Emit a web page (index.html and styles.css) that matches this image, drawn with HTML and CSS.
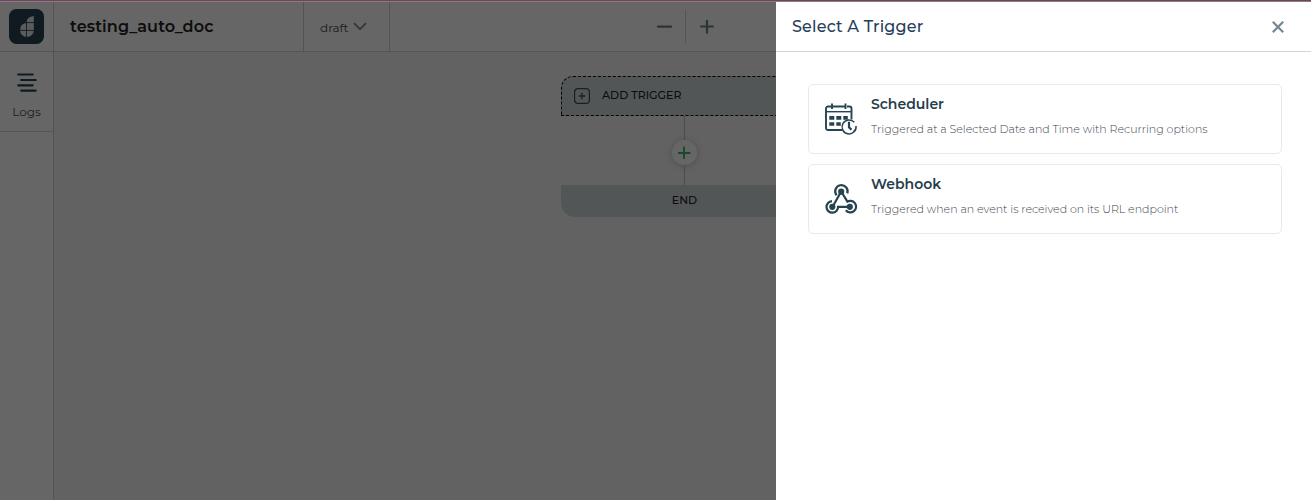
FILE: index.html
```html
<!DOCTYPE html>
<html lang="en">
<head>
<meta charset="utf-8">
<title>testing_auto_doc</title>
<link rel="stylesheet" href="styles.css">
</head>
<body>
<div class="app">
  <div class="top-strip"></div>
  <header class="header">
    <div class="brand">
      <svg class="logo" viewBox="0 0 35 35">
        <rect width="35" height="35" rx="7.500" fill="#264450"/>
        <path d="M24.800 7v14.300a6.900 6.700 0 0 1-13.800 0q0-6.300 6.300-7.300q.5-6.300 7.500-7z" fill="#e6e6e6"/>
        <path d="M17.500 13v16M10 21.400h16M17 13.600h9" stroke="#264450" stroke-width=".9" fill="none"/>
      </svg>
    </div>
    <div class="flow-name"><span class="t-name">testing_auto_doc</span></div>
    <div class="status">
      <span class="t-draft">draft</span>
      <svg width="14" height="9" viewBox="0 0 14 9"><path d="M1 1.200l6 6 6-6" fill="none" stroke="#7b8794" stroke-width="1.800"/></svg>
    </div>
    <div class="zoom">
      <svg width="16" height="16" viewBox="0 0 16 16"><path d="M2 7.600h13" stroke="#738087" stroke-width="2.200" stroke-linecap="round"/></svg>
      <i class="zoom-line"></i>
      <svg width="16" height="16" viewBox="0 0 16 16"><path d="M1.200 7.500h13.600M8 1v13.500" stroke="#738087" stroke-width="2.200"/></svg>
    </div>
  </header>
  <div class="main">
    <nav class="sidebar">
      <div class="side-item">
        <svg width="20" height="20" viewBox="0 0 20 20"><path d="M1.200 1.500h14.500M4.200 7h14.500M1.200 12.300h14.500M4.200 17.600h14.500" stroke="#264450" stroke-width="2.200" stroke-linecap="round"/></svg>
        <span class="t-logs">Logs</span>
      </div>
    </nav>
    <section class="canvas">
      <div class="flow">
        <div class="node trigger">
          <svg width="16" height="16" viewBox="0 0 16 16"><rect x=".6" y=".6" width="14.800" height="14.800" rx="3.500" fill="none" stroke="#3d4f60" stroke-width="1.200"/><path d="M4.700 8h6.600M8 4.700v6.600" stroke="#3d4f60" stroke-width="1.300"/></svg>
          <span class="t-add">ADD TRIGGER</span>
        </div>
        <i class="wire wire-top"></i>
        <div class="plus">
          <svg width="13" height="13" viewBox="0 0 13 13"><path d="M0 7h12.500M6 .5v12.500" stroke="#3cb371" stroke-width="1.800"/></svg>
        </div>
        <i class="wire wire-bottom"></i>
        <div class="node end"><span class="t-end">END</span></div>
      </div>
    </section>
  </div>
  <div class="backdrop"></div>
  <aside class="drawer">
    <div class="drawer-head">
      <span class="t-title">Select A Trigger</span>
      <svg width="12" height="12" viewBox="0 0 12 12"><path d="M.8.800l10.400 10.400M11.200.800L.8 11.200" stroke="#738792" stroke-width="2.200"/></svg>
    </div>
    <div class="options">
      <div class="option">
        <svg class="option-icon" viewBox="0 0 32 32" fill="none" stroke="#264450">
          <path d="M17 27H3.200A2 2 0 0 1 1 24.800V5.500a2 2 0 0 1 2-2h3.500M8 3.500h12M22 3.500h2.500a2 2 0 0 1 2 2v11" stroke-width="1.900"/>
          <path d="M7 .5v5.500M20.500.500v5.500" stroke-width="1.900"/>
          <path d="M1 8.700h25.500" stroke-width="1.400"/>
          <path d="M4.300 14.800h5M11.300 14.800h5M18.300 14.800h4.500" stroke-width="3.700"/>
          <path d="M4.300 21h5M11.300 21h4.500" stroke-width="3.700"/>
          <path d="M29.300 19.300a7 7 0 1 0 1.700 3.700M28.500 28.700a7 7 0 0 0 2.300-3.200" stroke-width="1.500"/>
          <path d="M24 18.800v5.500l2.500 2.500" stroke-width="2.200"/>
        </svg>
        <div class="copy"><span class="t-sch">Scheduler</span><span class="desc t-d1">Triggered at a Selected Date and Time with Recurring options</span></div>
      </div>
      <div class="option">
        <svg class="option-icon" viewBox="0 0 32 32" fill="none" stroke="#264450" stroke-width="2.200">
          <path d="M22.300 10.300A6.200 6.200 0 1 0 11.600 12.300"/>
          <path d="M16.200 8.500L8 23M16.200 8.500l6.500 10.600"/>
          <path d="M21.800 19a5.800 5.800 0 1 1-1 8.300"/>
          <path d="M7 18.100a5.800 5.800 0 1 0 6.100 5.700h11.700"/>
          <g fill="#264450" stroke="none"><circle cx="16.200" cy="8.700" r="3.100"/><circle cx="7.300" cy="23.800" r="3.100"/><circle cx="24.800" cy="23.800" r="3.100"/></g>
        </svg>
        <div class="copy"><span class="t-web">Webhook</span><span class="desc t-d2">Triggered when an event is received on its URL endpoint</span></div>
      </div>
    </div>
  </aside>
</div>
</body>
</html>
```
FILE: styles.css
```css
* { box-sizing: border-box; }
body { margin: 0; font-family: Montserrat, Inter, sans-serif; }
svg { display: block; flex: none; }
span { white-space: nowrap; }
.app { position: relative; width: 1311px; height: 500px; overflow: hidden; display: flex; flex-direction: column; background: #fff; }
.top-strip { flex: none; height: 2px; background: linear-gradient(#68495a 50%, #927684 50%); position: relative; z-index: 4; }
.header { flex: none; display: flex; height: 50px; background: #fff; border-bottom: 1px solid #d2d2d2; }
.brand { width: 54px; border-right: 1px solid #d2d2d2; padding: 7px 9px; }
.logo { width: 35px; height: 35px; }
.flow-name { width: 250px; padding-left: 16px; display: flex; align-items: center; border-right: 1px solid #d2d2d2; }
.status { width: 86px; padding-left: 16px; display: flex; align-items: center; gap: 5px; border-right: 1px solid #d2d2d2; }
.zoom { margin-left: 266px; display: flex; align-items: center; gap: 13px; }
.zoom-line { width: 1px; height: 33px; background: #d2d2d2; }
.main { flex: 1; display: flex; }
.sidebar { width: 54px; background: #fff; border-right: 1px solid #d2d2d2; }
.side-item { height: 80px; padding-top: 21px; display: flex; flex-direction: column; align-items: center; gap: 11px; border-bottom: 1px solid #d2d2d2; }
.canvas { flex: 1; background: #f4f4f4; padding: 24px 0 0 507px; }
.flow { width: 247px; display: flex; flex-direction: column; align-items: center; }
.node { width: 100%; background: #cdd8d8; display: flex; align-items: center; }
.trigger { height: 40px; padding-left: 12px; gap: 12px; border: 1px dashed #000; border-radius: 12px 12px 0 0; }
.end { height: 32px; justify-content: center; border-radius: 0 0 14px 14px; }
.wire { width: 1px; background: #bfbfbf; }
.wire-top { height: 24px; }
.wire-bottom { height: 20px; }
.plus { width: 25px; height: 25px; border-radius: 50%; background: #fff; box-shadow: 0 1px 7px rgba(0,0,0,.2); display: flex; align-items: center; justify-content: center; }
.backdrop { position: absolute; inset: 2px 0 0; background: rgba(0,0,0,.6); z-index: 2; }
.drawer { position: absolute; top: 2px; right: 0; bottom: 0; width: 535px; background: #fff; z-index: 3; }
.drawer-head { height: 50px; padding: 0 27px 0 16px; display: flex; align-items: center; justify-content: space-between; border-bottom: 1px solid #d4d7d9; }
.options { padding: 32px 29px 0 32px; display: flex; flex-direction: column; gap: 10px; }
.option { height: 70px; padding-left: 16px; display: flex; align-items: center; gap: 14px; border: 1px solid #e9e9e9; border-radius: 5px; }
.option-icon { width: 32px; height: 32px; overflow: visible; }
.copy { display: flex; flex-direction: column; gap: 9px; padding-bottom: 6px; }
.t-name { font-size: 16px; font-weight: 600; color: #222; letter-spacing: .15px; }
.t-draft { font-size: 12px; color: #444b55; line-height: 16px; padding-top: 2px; }
.t-logs { font-size: 12px; line-height: 16px; color: #42525d; }
.t-add { font-size: 11px; line-height: 14px; font-weight: 500; color: #222; padding-bottom: 2px; }
.t-end { font-size: 11px; line-height: 14px; font-weight: 500; color: #222; padding-bottom: 2px; }
.t-title { font-size: 16px; font-weight: 500; color: #263d5b; letter-spacing: .17px; }
.t-sch, .t-web { font-size: 14px; line-height: 17px; font-weight: 600; color: #263d4b; }
.desc { font-size: 11px; line-height: 14px; font-weight: 300; color: #3c4450; }
```
